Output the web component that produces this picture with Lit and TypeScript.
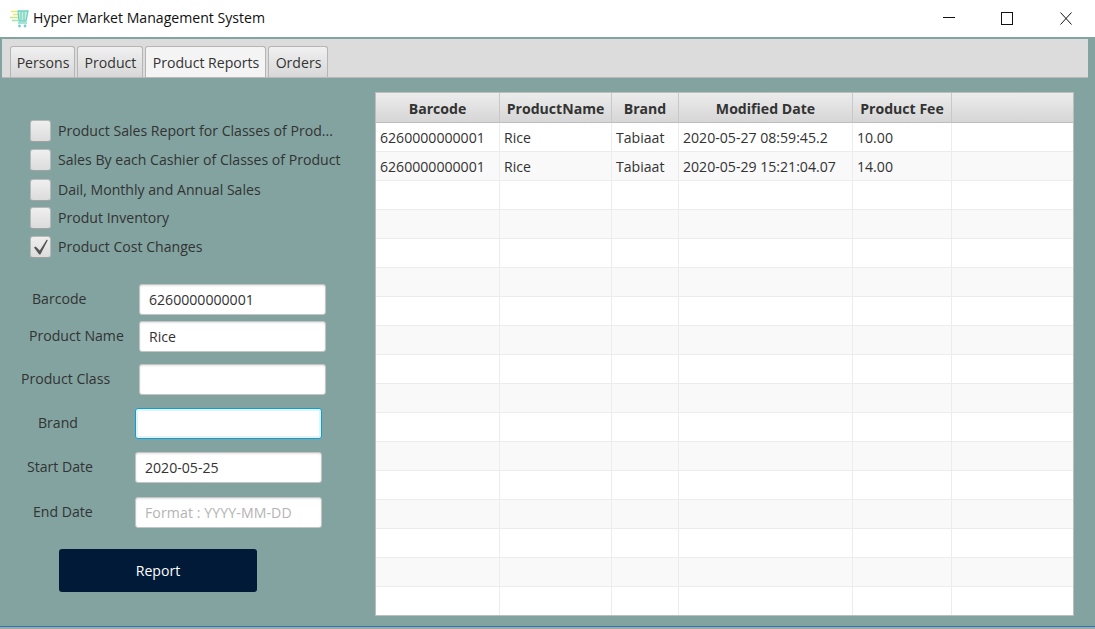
import { LitElement, html, css, svg } from 'lit';
import { customElement } from 'lit/decorators.js';

const TABS = [
  { name: 'Persons', width: 65 },
  { name: 'Product', width: 66 },
  { name: 'Product Reports', width: 121, active: true },
  { name: 'Orders', width: 60 },
];

// top is the gap above the box, irregular like the original form
const CHECKS = [
  { label: 'Product Sales Report for Classes of Prod...', top: 0 },
  { label: 'Sales By each Cashier of Classes of Product', top: 7 },
  { label: 'Dail, Monthly and Annual Sales', top: 8 },
  { label: 'Produt Inventory', top: 6 },
  { label: 'Product Cost Changes', top: 7, checked: true },
];

const FIELDS = [
  { label: 'Barcode', value: '6260000000001', left: 32, inputLeft: 139, top: 0 },
  { label: 'Product Name', value: 'Rice', left: 29, inputLeft: 139, top: 6 },
  { label: 'Product Class', value: '', left: 21, inputLeft: 139, top: 12 },
  { label: 'Brand', value: '', left: 38, inputLeft: 135, top: 13, focused: true },
  { label: 'Start Date', value: '2020-05-25', left: 27, inputLeft: 135, top: 13 },
  { label: 'End Date', value: '', left: 33, inputLeft: 135, top: 14, placeholder: 'Format : YYYY-MM-DD' },
];

const COLUMNS = [
  { name: 'Barcode', width: 124 },
  { name: 'ProductName', width: 112 },
  { name: 'Brand', width: 67 },
  { name: 'Modified Date', width: 174 },
  { name: 'Product Fee', width: 99 },
  { name: '', width: 121 },
];

const ROWS = [
  ['6260000000001', 'Rice', 'Tabiaat', '2020-05-27 08:59:45.2', '10.00', ''],
  ['6260000000001', 'Rice', 'Tabiaat', '2020-05-29 15:21:04.07', '14.00', ''],
  ...Array.from({ length: 15 }, () => ['', '', '', '', '', '']),
];

const cartIcon = svg`
  <svg width="20" height="20" viewBox="0 0 20 20" fill="none">
    <path d="M2 3.5h6" stroke="#ece86a" stroke-width="1.5"/>
    <path d="M4 6.5h5" stroke="#e2ea72" stroke-width="1.5"/>
    <path d="M1 9.5h8" stroke="#c6e884" stroke-width="1.5"/>
    <path d="M3 12.5h6" stroke="#a6e4a2" stroke-width="1.5"/>
    <path d="M9 3h10l-2 10H10z" fill="#c4eed8" stroke="#6dd0c4" stroke-width="1.3"/>
    <path d="M12 4v8M15 4v8" stroke="#6dd0c4" stroke-width="1.1"/>
    <path d="M9 15h9" stroke="#79d2bb" stroke-width="1.3"/>
    <circle cx="10.5" cy="18" r="1.4" fill="#72c9dc"/>
    <circle cx="16" cy="18" r="1.4" fill="#72c9dc"/>
  </svg>`;

@customElement('app-root')
export class AppRoot extends LitElement {
  static styles = css`
    :host {
      display: flex;
      flex-direction: column;
      width: 1095px;
      height: 629px;
      overflow: hidden;
      background: #82a3a0;
      font-family: "Open Sans", "Noto Sans", sans-serif;
      font-size: 14.1px;
      color: #333;
    }

    .titlebar {
      display: flex;
      align-items: center;
      height: 37px;
      flex: none;
      background: #fff;
      color: #111;
      padding-left: 9px;
    }
    .titlebar .logo { display: block; margin: 0 4px 1px 0; height: 20px; }
    .titlebar .title { flex: 1; margin-bottom: 2px; }
    .win-btn {
      display: flex;
      box-sizing: border-box;
      width: 58px;
      padding-right: 2px;
      justify-content: center;
    }
    .win-btn:last-child { padding-right: 0; }

    .tabbar {
      display: flex;
      flex: none;
      gap: 2px;
      align-items: flex-end;
      box-sizing: border-box;
      height: 39px;
      margin: 2px 7px 0 2px;
      padding-left: 8px;
      background: #dcdcdc;
      border-bottom: 1px solid #b9b9b9;
    }
    .tab {
      display: flex;
      align-items: center;
      justify-content: center;
      box-sizing: border-box;
      height: 31px;
      padding-left: 1px;
      border: 1px solid #b5b5b5;
      border-bottom: none;
      border-radius: 3px 3px 0 0;
      background: linear-gradient(#f0f0f0, #d8d8d8);
    }
    .tab.active { background: #f4f4f4; }

    .main {
      display: flex;
      flex: 1;
      min-height: 0;
    }
    .left {
      width: 376px;
      flex: none;
      box-sizing: border-box;
      padding-top: 42px;
    }

    .checks { padding-left: 30px; }
    .check {
      display: flex;
      align-items: center;
      gap: 7px;
    }
    .check span { margin-bottom: 2px; }
    .box {
      display: flex;
      align-items: center;
      justify-content: center;
      box-sizing: border-box;
      width: 21px;
      height: 22px;
      border: 1px solid #b8b8b8;
      border-bottom-color: #a2a2a2;
      border-radius: 3px;
      background: linear-gradient(#efefef, #dcdcdc);
    }
    .box svg { overflow: visible; }

    .form { margin-top: 26px; }
    .field {
      display: flex;
      align-items: center;
      height: 31px;
    }
    .field label { display: block; margin-bottom: 2px; }
    input {
      box-sizing: border-box;
      width: 187px;
      height: 31px;
      padding: 0 9px;
      border: 1px solid #c4c4c4;
      border-radius: 3px;
      background: #fff;
      box-shadow: inset 0 1px 2px #e4e4e4;
      outline: none;
      font: inherit;
      color: #333;
    }
    input::placeholder { color: #b4b4b4; opacity: 1; letter-spacing: 0.1px; }
    input.focused {
      border-color: #0b9fd8;
      box-shadow: inset 0 0 0 2px #e2f3f9;
    }

    .report {
      display: block;
      width: 198px;
      height: 43px;
      margin: 21px 0 0 59px;
      border: none;
      border-radius: 3px;
      background: #001a37;
      color: #fff;
      font: inherit;
    }

    table {
      border-collapse: separate;
      border-spacing: 0;
      table-layout: fixed;
      width: 697px;
      height: 522px;
      margin-top: 15px;
      background: #fff;
      outline: 1px solid #bdbdbd;
    }
    th {
      box-sizing: border-box;
      height: 30px;
      padding: 1px 4px 0;
      border-right: 1px solid #c8c8c8;
      border-bottom: 1px solid #bdbdbd;
      background: linear-gradient(#ececec, #d6d6d6);
      font-weight: 700;
      text-align: center;
      white-space: nowrap;
    }
    th:last-child, td:last-child { border-right: none; }
    td {
      box-sizing: border-box;
      height: 29px;
      padding: 0 4px;
      border-right: 1px solid #ececec;
      border-bottom: 1px solid #ececec;
      white-space: nowrap;
      overflow: hidden;
    }
    tr.odd td { background: #f9f9f9; }
    tr:last-child td { height: 28px; border-bottom: none; }

    .statusline {
      flex: none;
      height: 3px;
      box-sizing: border-box;
      border-top: 1px solid #1a7ad8;
      background: #a8a898;
    }
  `;

  render() {
    return html`
      <div class="titlebar">
        <span class="logo">${cartIcon}</span>
        <span class="title">Hyper Market Management System</span>
        <span class="win-btn">
          <svg width="12" height="13" viewBox="0 0 12 13"><path d="M0 5.5h12" stroke="#111" fill="none"/></svg>
        </span>
        <span class="win-btn">
          <svg width="12" height="13" viewBox="0 0 12 13"><rect x=".5" y=".5" width="11" height="12" stroke="#111" fill="none"/></svg>
        </span>
        <span class="win-btn">
          <svg width="12" height="13" viewBox="0 0 12 13"><path d="M.5.5l11 12M11.5.5l-11 12" stroke="#111" fill="none"/></svg>
        </span>
      </div>

      <div class="tabbar">
        ${TABS.map(
          (t) => html`<div class="tab ${t.active ? 'active' : ''}" style="width:${t.width}px">${t.name}</div>`
        )}
      </div>

      <div class="main">
        <div class="left">
          <div class="checks">
            ${CHECKS.map(
              (c) => html`
                <div class="check" style="margin-top:${c.top}px">
                  <div class="box">
                    ${c.checked
                      ? html`<svg width="15" height="15" viewBox="0 0 15 15"><path d="M1 7.5L2.6 6.4 6.8 10.5 13.8-.5 14.8.2 7.4 14.5H6.2z" fill="#555"/></svg>`
                      : ''}
                  </div>
                  <span>${c.label}</span>
                </div>
              `
            )}
          </div>

          <div class="form">
            ${FIELDS.map(
              (f) => html`
                <div class="field" style="margin-top:${f.top}px;padding-left:${f.left}px">
                  <label style="width:${f.inputLeft - f.left}px">${f.label}</label>
                  <input
                    class=${f.focused ? 'focused' : ''}
                    .value=${f.value}
                    placeholder=${f.placeholder ?? ''}
                  />
                </div>
              `
            )}
          </div>

          <button class="report">Report</button>
        </div>

        <table>
          <colgroup>
            ${COLUMNS.map((c) => html`<col style="width:${c.width}px" />`)}
          </colgroup>
          <thead>
            <tr>${COLUMNS.map((c) => html`<th>${c.name}</th>`)}</tr>
          </thead>
          <tbody>
            ${ROWS.map(
              (r, i) => html`<tr class=${i % 2 ? 'odd' : ''}>${r.map((v) => html`<td>${v}</td>`)}</tr>`
            )}
          </tbody>
        </table>
      </div>

      <div class="statusline"></div>
    `;
  }
}
